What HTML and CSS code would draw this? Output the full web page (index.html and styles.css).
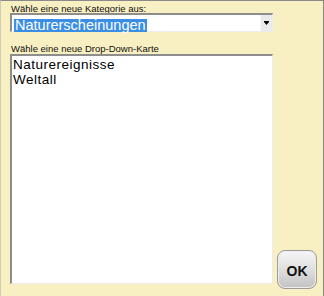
FILE: index.html
```html
<!DOCTYPE html>
<html>
<head>
<meta charset="utf-8">
<link rel="stylesheet" href="styles.css">
</head>
<body>
<div class="window">
  <div class="label">Wähle eine neue Kategorie aus:</div>
  <div class="combo">
    <div class="combo-text"><span class="sel">Naturerscheinungen</span></div>
    <div class="combo-btn">
      <svg width="5" height="4" viewBox="0 0 5 4"><rect x="0" y="0" width="5" height="1" fill="#000"/><polygon points="0,1 5,1 2.5,4" fill="#000"/></svg>
    </div>
  </div>
  <div class="label label2">Wähle eine neue Drop-Down-Karte</div>
  <div class="row">
    <div class="list">
      <div class="item">Naturereignisse</div>
      <div class="item">Weltall</div>
    </div>
    <button class="ok">OK</button>
  </div>
</div>
</body>
</html>
```
FILE: styles.css
```css
html, body {
  margin: 0;
  padding: 0;
}
.window {
  width: 324px;
  height: 296px;
  box-sizing: border-box;
  background: #f8f0c2;
  border-top: 1px solid #8a8a8a;
  border-right: 1px solid #8a8a8a;
  border-left: 1px solid #cfcab0;
  padding: 3px 0 0 9px;
  font-family: "Liberation Sans Narrow", "Liberation Sans", Arial, sans-serif;
  display: flex;
  flex-direction: column;
}
.label {
  font-size: 9.5px;
  line-height: 9px;
  color: #111;
  height: 9px;
  padding-left: 1px;
}
.combo {
  width: 263px;
  height: 19px;
  box-sizing: border-box;
  background: #fff;
  border-top: 2px solid #8d8d8d;
  border-left: 2px solid #8d8d8d;
  border-right: 1px solid #ececec;
  border-bottom: 1px solid #ececec;
  display: flex;
}
.combo-text {
  flex: 1;
  padding: 1px 0 0 2px;
}
.sel {
  display: inline-block;
  background: #3a8ee6;
  color: #fff;
  font-size: 14.5px;
  line-height: 13px;
  padding: 0 1px;
}
.combo-btn {
  width: 11px;
  background: #ebebeb;
  border-left: 1px solid #f6f6f6;
  display: flex;
  align-items: center;
  justify-content: center;
}
.combo-btn svg {
  display: block;
}
.label2 {
  margin-top: 12px;
  margin-bottom: 1px;
}
.row {
  flex: 1;
  display: flex;
  align-items: flex-end;
  gap: 4px;
  padding-bottom: 7px;
}
.list {
  width: 263px;
  height: 230px;
  box-sizing: border-box;
  margin-bottom: 5px;
  background: #fff;
  border-top: 2px solid #8d8d8d;
  border-left: 2px solid #8d8d8d;
  border-right: 1px solid #ececec;
  border-bottom: 1px solid #ececec;
  padding: 1px 0 0 1px;
}
.item {
  font-size: 13.5px;
  line-height: 15px;
  letter-spacing: 0.5px;
  color: #000;
}
.ok {
  width: 40px;
  height: 39px;
  box-sizing: border-box;
  border: 1px solid #9c9c9c;
  border-radius: 8px;
  background: linear-gradient(#f6f6f6, #dcdcdc 55%, #c2c2c2);
  box-shadow: inset 0 0 0 1px #ededed;
  font-family: "Liberation Sans", Arial, sans-serif;
  font-weight: bold;
  font-size: 14px;
  color: #111;
  padding: 3px 0 0 0;
}
```
